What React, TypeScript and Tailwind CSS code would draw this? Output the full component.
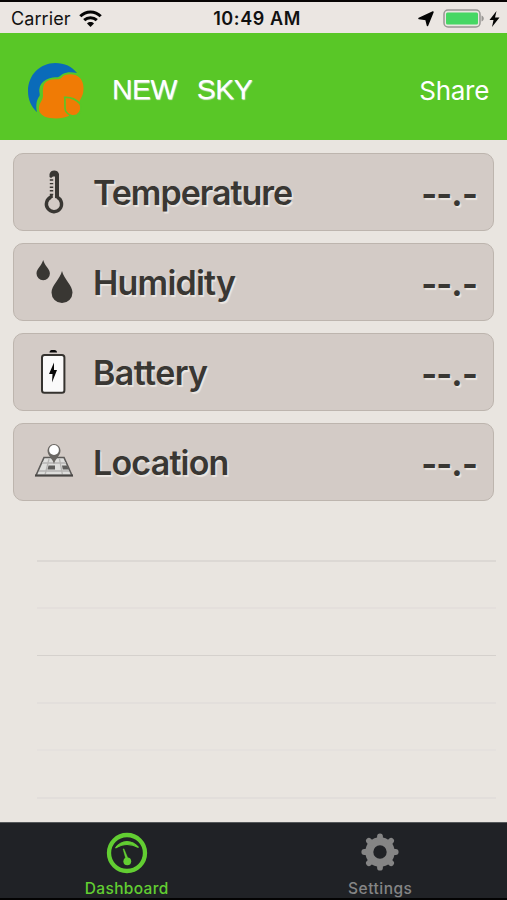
import type { ReactNode } from 'react';

interface Reading {
  label: string;
  value: string;
  icon: ReactNode;
  tracking: string;
}

function LogoIcon() {
  return (
    <svg className="mt-[8px] h-14 w-14" viewBox="24 38 168 168">
      <path d="M51 186C33 168 24 148 24 122c0-48 36-84 82-84 28 0 50 11 65 30-15-3-30-4-43 3-6 3-10 9-15 10-12-2-24 1-35 7-13 7-19 17-20 29-1 7 2 12 1 19-9 12-13 28-8 50z" fill="#0a6bb9" />
      <path d="M74 99c8-11 22-14 42-12 7-1 9-8 17-12 16-6 36-3 46 7 10 10 13 25 11 41-1 9-4 16-8 22l-8 20-28 32c-14 7-36 9-56 6-23-3-35-15-33-32 1-13 11-20 12-34 0-15-2-26 5-38z" fill="#f07b05" />
      <path d="M134 141c18-1 34 6 45 18 8 11 4 28-8 35-13 6-28 0-34-12-5-13 0-26-3-41z" fill="#f07b05" stroke="#59c727" strokeWidth="5" />
    </svg>
  );
}

function WifiIcon() {
  return (
    <svg className="h-[17px] w-[23px]" viewBox="0 0 23 17" fill="none" stroke="#050505" strokeWidth="3">
      <path d="M1.300 6.300C7 .5 16 .5 21.700 6.300" />
      <path d="M5.200 10.200c3.600-3.400 9-3.400 12.600 0" />
      <path d="M8 13.400c2-1.900 5-1.900 7 0l-3.500 3.500z" fill="#050505" stroke="none" />
    </svg>
  );
}

function ThermometerIcon() {
  return (
    <svg className="w-10 h-12" viewBox="0 0 40 48" fill="none" stroke="#393733">
      <path d="M17 29.100a7.600 7.600 0 1 0 6.400.2" strokeWidth="3.400" />
      <path d="M15.500 9V6a5 5 0 0 1 9.500 0V31l-4-1V8.500h-2L17 10z" fill="#393733" stroke="none" />
      <path d="M17.300 27v3" strokeWidth="3" />
      <path d="M15.800 12h3.400M15.800 15.600h3.400M15.800 19.200h3.400M15.800 22.800h3.400M15.800 26.400h3.400" strokeWidth="1.400" />
    </svg>
  );
}

function DropsIcon() {
  return (
    <svg className="w-10 h-12" viewBox="0 0 40 48" fill="#393733">
      <path d="M9.200 2C7.500 8 2.500 11 2.500 15.500a6.700 6.700 0 0 0 13.400 0C15.900 11 10.700 8 9.200 2z" />
      <path d="M28 13c-2 8-10.500 14.500-10.500 21.500a10.500 10.500 0 0 0 21 0C38.500 27.500 30 21 28 13z" />
    </svg>
  );
}

function BatteryIcon() {
  return (
    <svg className="w-10 h-12" viewBox="0 0 40 48">
      <path d="M15.500 4.500c0-1.500 1-2.500 2-2.500h3c1.500 0 2.500 1 2.500 2.500z" fill="#080808" />
      <rect x="8" y="7" width="22.400" height="37.800" rx="2.500" fill="#fafafa" stroke="#35332f" strokeWidth="2" />
      <path d="M20 14.500L15 26H18.500L18 34.500 23 22H20z" fill="#080808" />
    </svg>
  );
}

function MapIcon() {
  return (
    <svg className="w-10 h-12" viewBox="0 0 40 48">
      <path d="M10 19.500h20l8 18h-36z" fill="#dededc" stroke="#5d5b59" strokeWidth="1.600" />
      <path d="M8 25h24M5 33h30M15 21l-4 16M25.500 21l3 16" stroke="#b5b4b2" strokeWidth="1.300" />
      <path d="M14.500 27.500h6.500v4h-7.500zM28 27.500h5l1.800 4h-6z" fill="#5f5e5c" />
      <path d="M1 37.500h38" stroke="#484644" strokeWidth="2" />
      <path d="M20 26c-1-5-6.500-8-6.500-13.500a6.500 6.500 0 0 1 13 0C26.500 18 21 21 20 26z" fill="#6a6763" />
      <circle cx="20" cy="12" r="4.900" fill="white" />
    </svg>
  );
}

const readings: Reading[] = [
  { label: 'Temperature', value: '--.-', icon: <ThermometerIcon />, tracking: 'tracking-[-1.02px]' },
  { label: 'Humidity', value: '--.-', icon: <DropsIcon />, tracking: 'tracking-[-0.8px]' },
  { label: 'Battery', value: '--.-', icon: <BatteryIcon />, tracking: 'tracking-[-0.6px]' },
  { label: 'Location', value: '--.-', icon: <MapIcon />, tracking: 'tracking-[-0.8px]' },
];

function StatusBar() {
  return (
    <div className="flex h-[33px] items-center border-t-2 border-[#080504] bg-[#ebe6e2] pt-[2px] pr-[7px] pl-[11px] text-[18px] leading-none text-[#111]">
      <div className="flex flex-1 items-center gap-[8px]">
        <span className="tracking-[0.1px]">Carrier</span>
        <WifiIcon />
      </div>
      <span className="ml-[3px] font-semibold tracking-[0.6px]">10:49 AM</span>
      <div className="flex flex-1 items-center justify-end">
        <svg className="mr-[9px] h-4 w-4" viewBox="0 0 16 16" fill="#050505" stroke="#050505" strokeLinejoin="round">
          <path d="M15 1L9.500 14.500 8 8.500 1 7.500z" strokeWidth="1.500" />
        </svg>
        <svg className="mr-[5px] h-[19px] w-[41px]" viewBox="0 0 41 19">
          <rect x="1" y="1" width="36" height="17" rx="4" fill="none" stroke="#999794" strokeWidth="1.500" />
          <rect x="3" y="3.500" width="32" height="12" rx="1.500" fill="#47d764" />
          <path d="M38.500 6.500c3 1 3 5 0 6z" fill="#999794" />
        </svg>
        <svg className="h-4 w-[11px]" viewBox="0 0 11 16" fill="#050505">
          <path d="M7.500 0L.5 9h4L3 16 10.500 6.500H6z" />
        </svg>
      </div>
    </div>
  );
}

function Header() {
  return (
    <header className="flex h-[107px] items-center bg-[#59c727] pr-[18px] pl-[28px] text-white">
      <LogoIcon />
      <h1 className="mt-[5px] ml-[28px] flex-1 font-['Liberation_Sans',sans-serif] text-[28.5px] leading-none tracking-[-0.5px] [word-spacing:2.4px] whitespace-pre [text-shadow:0.5px_0.5px_1px_#dce8d5]">
        NEW  SKY
      </h1>
      <button className="mt-[9px] text-[26px] leading-none tracking-[-0.3px]">Share</button>
    </header>
  );
}

function ReadingCard({ label, value, icon, tracking }: Reading) {
  return (
    <div className="flex h-[78px] items-center rounded-[10px] border border-[#bdb5ae] bg-[#d3cbc6] pr-[16px] pl-5 text-[#393733]">
      {icon}
      <span className={`mt-[2px] ml-[19px] flex-1 text-[34px] leading-none font-semibold [text-shadow:1.5px_2px_1px_#ece7e2] ${tracking}`}>
        {label}
      </span>
      <span className="mt-[4px] text-[34px] leading-none font-bold tracking-[-0.8px] [text-shadow:1.5px_2px_1px_#ece7e2]">{value}</span>
    </div>
  );
}

function EmptyRows() {
  return (
    <div className="mr-[11px] ml-[37px] flex flex-col">
      <div className="h-[61px] border-b-2 border-[#dcd8d4]" />
      <div className="h-[47px] border-b-2 border-[#e4dfdc]" />
      <div className="h-[47px] border-b border-[#d5d1cd]" />
      <div className="h-12 border-b-2 border-[#e3dfdc]" />
      <div className="h-[47px] border-b-2 border-[#e5e1de]" />
      <div className="h-12 border-b-2 border-[#e2dedb]" />
    </div>
  );
}

function TabBar() {
  return (
    <nav className="grid h-[78px] grid-cols-2 border-t border-b-2 border-t-[#55585a] border-b-[#030303] bg-[#202226] text-[15.5px] leading-none font-medium">
      <button className="flex flex-col items-center pt-[9px] text-[#62ce32]">
        <svg className="h-[42px] w-[42px]" viewBox="0 0 42 42" fill="none" stroke="currentColor">
          <circle cx="21" cy="21" r="18" strokeWidth="4.300" />
          <path d="M9.500 16C12 12.500 16 9.500 21 9.500S30 12.500 32.500 15.500C28 13 25 12.500 21 12.500S14 13.500 9.500 16z" fill="currentColor" strokeWidth="1.200" />
          <path d="M17 17l3 11 2.500-.6L18 16.800z" fill="currentColor" strokeWidth=".3" />
          <circle cx="21.300" cy="29.300" r="3.900" fill="currentColor" stroke="none" />
        </svg>
        <span className="mt-[7px] tracking-[0.35px]">Dashboard</span>
      </button>
      <button className="flex flex-col items-center pt-[8px] text-[#858585]">
        <svg className="h-[42px] w-[42px]" viewBox="0 0 42 42" fill="none" stroke="currentColor" strokeLinecap="round">
          <circle cx="21" cy="21" r="10.700" strokeWidth="8" />
          <path d="M21 5.300v3M21 33.700v3M5.300 21h3M33.700 21h3M9.900 9.900l2 2M30.100 30.100l2 2M32.100 9.900l-2 2M11.900 30.100l-2 2" strokeWidth="5.800" />
        </svg>
        <span className="mt-[8px] tracking-[0.5px]">Settings</span>
      </button>
    </nav>
  );
}

export default function App() {
  return (
    <div className="flex h-[900px] w-[507px] flex-col overflow-hidden bg-[#e9e5e0] font-['Inter',sans-serif]">
      <StatusBar />
      <Header />
      <main className="flex-1">
        <div className="flex flex-col gap-3 px-[13px] pt-[13px]">
          {readings.map((reading) => (
            <ReadingCard key={reading.label} {...reading} />
          ))}
        </div>
        <EmptyRows />
      </main>
      <TabBar />
    </div>
  );
}
